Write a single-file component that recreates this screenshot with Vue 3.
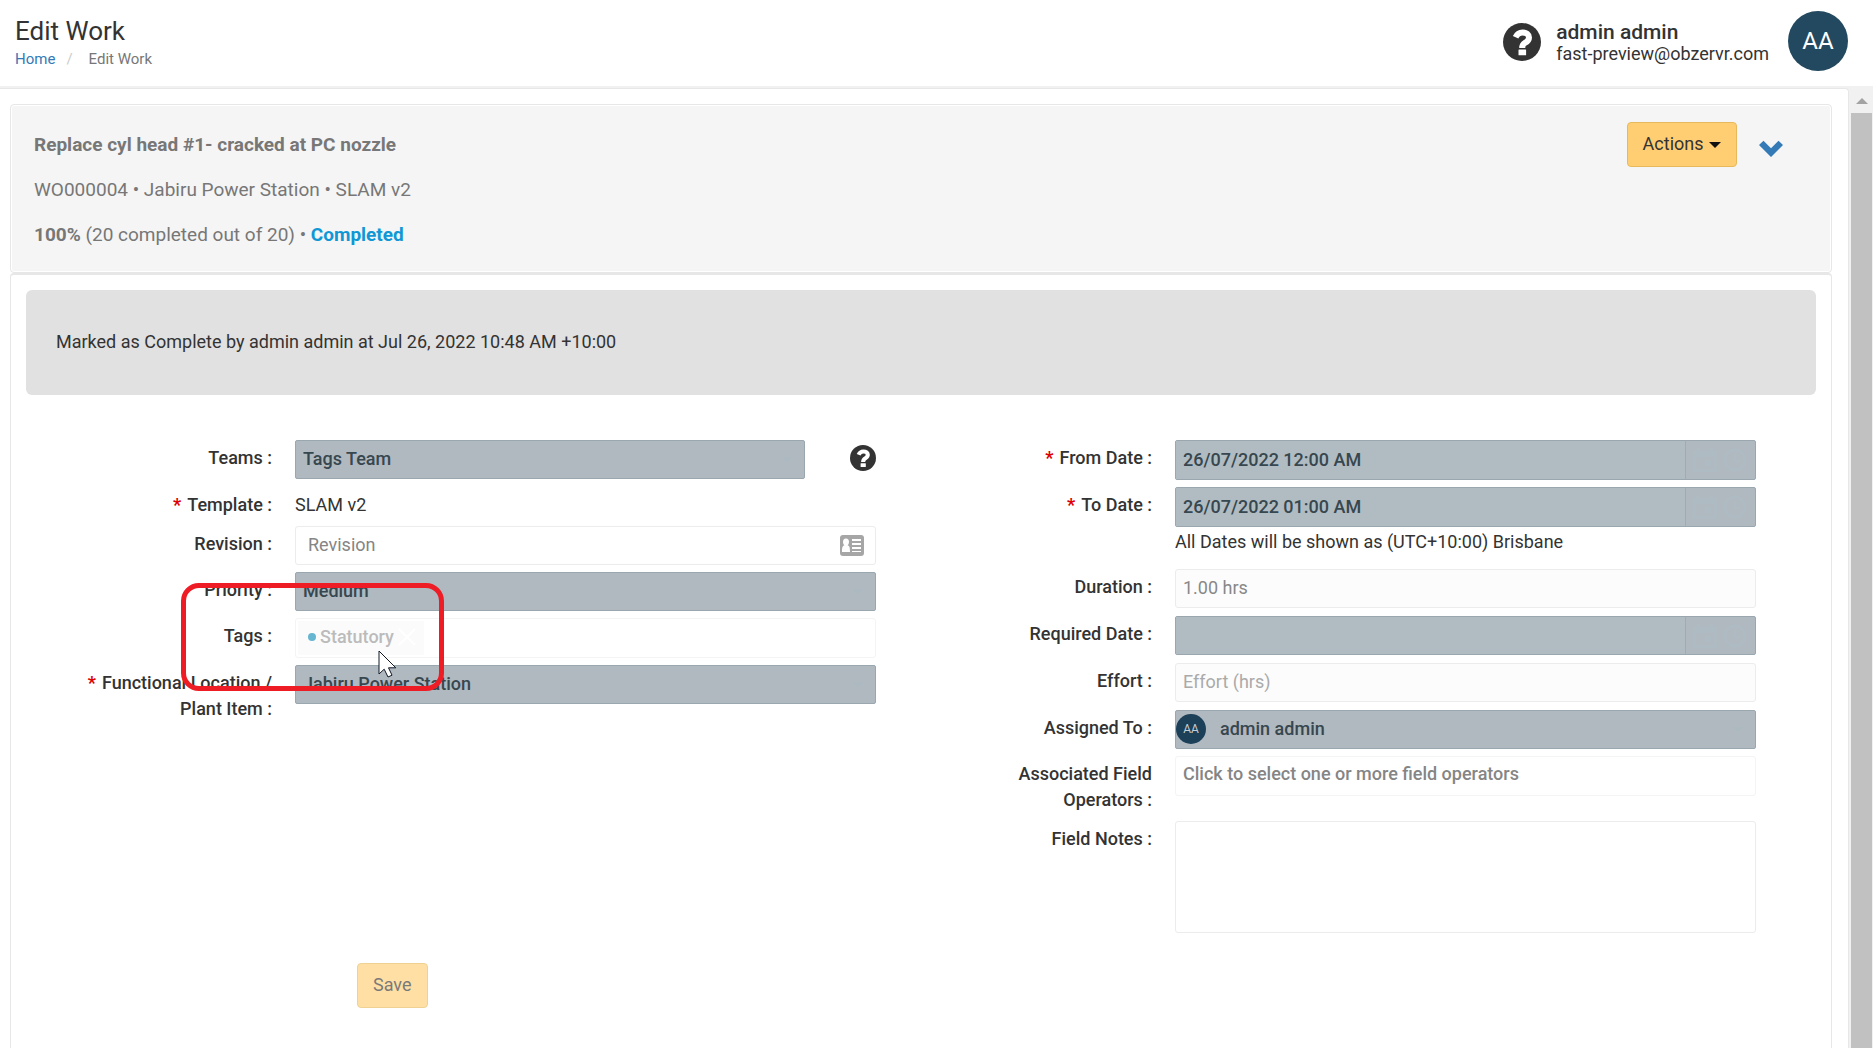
<script setup>
import { ref } from 'vue'

const revision = ref('')
const effort = ref('')
const notes = ref('')
</script>

<template>
  <div class="page">
    <header class="topbar">
      <div class="heading">
        <h1>Edit Work</h1>
        <nav class="crumbs" aria-label="Breadcrumb">
          <a href="#">Home</a>
          <span class="slash">/</span>
          <span>Edit Work</span>
        </nav>
      </div>
      <div class="account">
        <button class="icon-btn help" type="button" aria-label="Help">
          <svg width="38" height="38" viewBox="0 0 38 38" aria-hidden="true">
            <circle cx="19" cy="19" r="19" fill="#333" />
            <path d="M12.600 14.200 C14 11 16 9.400 19.500 9.400 C23.500 9.400 26 11.500 26 14.400 C26 17.400 24 18.700 22 19.800 C20 21 19.200 22 19.200 25" fill="none" stroke="#fff" stroke-width="6" />
            <rect x="15.500" y="26.600" width="7.600" height="5.600" rx="0.500" fill="#fff" />
          </svg>
        </button>
        <div class="who">
          <strong>admin admin</strong>
          <span>fast-preview@obzervr.com</span>
        </div>
        <div class="avatar">AA</div>
      </div>
    </header>

    <div class="viewport">
      <main class="content">
        <section class="card-head">
          <div class="summary">
            <p><b>Replace cyl head #1- cracked at PC nozzle</b></p>
            <p>WO000004 • Jabiru Power Station • SLAM v2</p>
            <p><b>100%</b> (20 completed out of 20) • <b class="done">Completed</b></p>
          </div>
          <div class="tools">
            <button class="btn" type="button">Actions <span class="caret"></span></button>
            <button class="icon-btn chevron" type="button" aria-label="Collapse">
              <svg width="26" height="18" viewBox="0 0 26 18" aria-hidden="true">
                <path d="M1 5 L5.500 0.800 L13 8.300 L20.500 0.800 L25 5 L13 17 Z" fill="#337ab7" />
              </svg>
            </button>
          </div>
        </section>

        <section class="card-body">
          <div class="notice">Marked as Complete by admin admin at Jul 26, 2022 10:48 AM +10:00</div>

          <form @submit.prevent>
            <div class="columns">
              <div class="column">
                <div class="row">
                  <label for="teams">Teams&nbsp;:</label>
                  <div class="control with-help">
                    <div class="overlaid">
                      <select id="teams" class="box grey" disabled><option>Tags Team</option></select>
                      <span class="drop"></span>
                    </div>
                    <button class="icon-btn" type="button" aria-label="About teams">
                      <svg width="26" height="26" viewBox="0 0 38 38" aria-hidden="true">
                        <circle cx="19" cy="19" r="19" fill="#333" />
                        <path d="M12.600 14.200 C14 11 16 9.400 19.500 9.400 C23.500 9.400 26 11.500 26 14.400 C26 17.400 24 18.700 22 19.800 C20 21 19.200 22 19.200 25" fill="none" stroke="#fff" stroke-width="6" />
                        <rect x="15.500" y="26.600" width="7.600" height="5.600" rx="0.500" fill="#fff" />
                      </svg>
                    </button>
                  </div>
                </div>
                <div class="row">
                  <span class="label required">Template&nbsp;:</span>
                  <div class="control plain">SLAM v2</div>
                </div>
                <div class="row">
                  <label for="revision">Revision&nbsp;:</label>
                  <div class="control overlaid">
                    <input id="revision" v-model="revision" class="box wide-pad" type="text" placeholder="Revision">
                    <svg class="card-icon" width="24" height="21" viewBox="0 0 24 21" aria-hidden="true">
                      <rect width="24" height="21" rx="3" fill="#a6a6a6" />
                      <path d="M6 3.500 C8 3.500 9 5 9 7 C9 8.500 8.300 9.600 7.600 10.300 C9.500 10.800 10 12.500 10 17 H2 C2 12.500 2.500 10.800 4.400 10.300 C3.700 9.600 3 8.500 3 7 C3 5 4 3.500 6 3.500 Z M12 4 H21 V6 H12 Z M12 8 H21 V10 H12 Z M12 12 H21 V14 H12 Z M12 16 H21 V17 H12 Z" fill="#fff" />
                    </svg>
                  </div>
                </div>
                <div class="row">
                  <label for="priority">Priority&nbsp;:</label>
                  <div class="control overlaid">
                    <select id="priority" class="box grey" disabled><option>Medium</option></select>
                    <span class="drop"></span>
                  </div>
                </div>
                <div class="row tags-row">
                  <span class="label">Tags&nbsp;:</span>
                  <div class="control tag-box">
                    <span class="tag">
                      <span class="dot"></span>Statutory
                      <button class="icon-btn" type="button" disabled aria-label="Remove Statutory">
                        <svg width="18" height="18" viewBox="0 0 18 18" aria-hidden="true">
                          <path d="M1 1 L17 17 M17 1 L1 17" stroke="#fff" stroke-width="2" />
                        </svg>
                      </button>
                    </span>
                  </div>
                  <div class="marker"></div>
                  <svg class="pointer" width="20" height="28" viewBox="0 0 20 28" aria-hidden="true">
                    <path d="M1 1 V24 L6.200 19.200 L10 27 L14 25.200 L10.500 17.800 H17.800 Z" fill="#fff" stroke="#111827" stroke-width="1" />
                  </svg>
                </div>
                <div class="row">
                  <label class="required" for="location">Functional Location / Plant Item&nbsp;:</label>
                  <div class="control overlaid">
                    <select id="location" class="box grey" disabled><option>Jabiru Power Station</option></select>
                    <span class="drop"></span>
                  </div>
                </div>
              </div>

              <div class="column">
                <div class="row">
                  <label class="required" for="from">From Date&nbsp;:</label>
                  <div class="control date">
                    <input id="from" type="text" value="26/07/2022 12:00 AM" disabled>
                    <span class="addon">
                      <svg width="56" height="26" viewBox="0 0 56 26" aria-hidden="true">
                        <path d="M1 4 H25 V25 H1 Z M4 10 V22 H22 V10 Z M5 1 H8 V4 H5 Z M18 1 H21 V4 H18 Z M13 13 H19 V19 H13 Z" fill-rule="evenodd" fill="#afbbc2" />
                        <circle cx="43" cy="13" r="10" fill="none" stroke="#afbbc2" stroke-width="3" />
                        <path d="M43 7 V14 H48" fill="none" stroke="#afbbc2" stroke-width="2" />
                      </svg>
                    </span>
                  </div>
                </div>
                <div class="row">
                  <label class="required" for="to">To Date&nbsp;:</label>
                  <div class="control">
                    <div class="date">
                      <input id="to" type="text" value="26/07/2022 01:00 AM" disabled>
                      <span class="addon">
                        <svg width="56" height="26" viewBox="0 0 56 26" aria-hidden="true">
                          <path d="M1 4 H25 V25 H1 Z M4 10 V22 H22 V10 Z M5 1 H8 V4 H5 Z M18 1 H21 V4 H18 Z M13 13 H19 V19 H13 Z" fill-rule="evenodd" fill="#afbbc2" />
                          <circle cx="43" cy="13" r="10" fill="none" stroke="#afbbc2" stroke-width="3" />
                          <path d="M43 7 V14 H48" fill="none" stroke="#afbbc2" stroke-width="2" />
                        </svg>
                      </span>
                    </div>
                    <p class="hint">All Dates will be shown as (UTC+10:00) Brisbane</p>
                  </div>
                </div>
                <div class="row tall">
                  <label for="duration">Duration&nbsp;:</label>
                  <div class="control">
                    <input id="duration" class="box off" type="text" value="1.00 hrs" disabled>
                  </div>
                </div>
                <div class="row tall">
                  <label for="required-date">Required Date&nbsp;:</label>
                  <div class="control date short">
                    <input id="required-date" type="text" disabled>
                    <span class="addon">
                      <svg width="56" height="26" viewBox="0 0 56 26" aria-hidden="true">
                        <path d="M1 4 H25 V25 H1 Z M4 10 V22 H22 V10 Z M5 1 H8 V4 H5 Z M18 1 H21 V4 H18 Z M13 13 H19 V19 H13 Z" fill-rule="evenodd" fill="#afbbc2" />
                        <circle cx="43" cy="13" r="10" fill="none" stroke="#afbbc2" stroke-width="3" />
                        <path d="M43 7 V14 H48" fill="none" stroke="#afbbc2" stroke-width="2" />
                      </svg>
                    </span>
                  </div>
                </div>
                <div class="row tall">
                  <label for="effort">Effort&nbsp;:</label>
                  <div class="control">
                    <input id="effort" v-model="effort" class="box off" type="text" placeholder="Effort (hrs)" disabled>
                  </div>
                </div>
                <div class="row">
                  <label for="assigned">Assigned To&nbsp;:</label>
                  <div class="control overlaid">
                    <select id="assigned" class="box grey person" disabled><option>admin admin</option></select>
                    <span class="avatar mini">AA</span>
                    <span class="drop"></span>
                  </div>
                </div>
                <div class="row">
                  <label for="operators">Associated Field Operators&nbsp;:</label>
                  <div class="control">
                    <input id="operators" class="box faint" type="text" placeholder="Click to select one or more field operators">
                  </div>
                </div>
                <div class="row">
                  <label for="notes">Field Notes&nbsp;:</label>
                  <div class="control">
                    <textarea id="notes" v-model="notes" class="box area"></textarea>
                  </div>
                </div>
              </div>
            </div>
            <div class="actions">
              <button class="btn" type="submit" disabled>Save</button>
            </div>
          </form>
        </section>
      </main>
      <div class="scrollbar" aria-hidden="true">
        <svg width="12" height="6" viewBox="0 0 12 6"><path d="M0 6 L6 0 L12 6 Z" fill="#a3a3a3" /></svg>
        <div class="thumb"></div>
      </div>
    </div>
  </div>
</template>

<style>
body {
  overflow: hidden;
}
</style>

<style scoped>
.page,
.page * {
  box-sizing: border-box;
}
.page {
  display: flex;
  flex-direction: column;
  height: 100vh;
  overflow: hidden;
  font: 400 18px/26px Roboto, "Liberation Sans", sans-serif;
  color: #333;
  background: #fff;
}
button,
input,
select,
textarea {
  font: inherit;
  color: inherit;
  margin: 0;
}
.icon-btn {
  display: flex;
  padding: 0;
  border: 0;
  background: none;
}
.topbar {
  display: flex;
  flex: none;
  justify-content: space-between;
  height: 86px;
  padding: 11px 25px 0 15px;
}
h1 {
  margin: 5px 0 0;
  font-size: 26px;
  line-height: 30px;
  font-weight: 400;
}
.crumbs {
  display: flex;
  font-size: 15px;
  line-height: 26px;
  color: #777;
}
.crumbs a {
  color: #337ab7;
  text-decoration: none;
}
.slash {
  padding: 0 16px 0 11px;
  color: #ccc;
}
.account {
  display: flex;
  align-items: center;
  height: 60px;
}
.help {
  margin-top: 2px;
}
.who {
  display: flex;
  flex-direction: column;
  margin: 0 19px 0 15px;
  padding-top: 4px;
  line-height: 22px;
}
.who strong {
  font-size: 21px;
  font-weight: 500;
}
.avatar {
  width: 60px;
  height: 60px;
  border-radius: 50%;
  background: #22495f;
  color: #fff;
  font-size: 24px;
  line-height: 60px;
  text-align: center;
}
.viewport {
  display: flex;
  flex: 1;
  min-height: 0;
  padding-top: 2px;
  background: #f1f1f1;
}
.content {
  display: flex;
  flex: 1;
  flex-direction: column;
  padding: 15px 16px 0 10px;
  border: solid #e7e7e7;
  border-width: 1px 1px 0 0;
  border-radius: 0 4px 0 0;
  background: #fff;
}
.scrollbar {
  display: flex;
  flex-direction: column;
  align-items: center;
  width: 24px;
  padding: 10px 1px 0 2px;
}
.thumb {
  flex: 1;
  width: 21px;
  margin-top: 9px;
  background: #c1c1c1;
}
.card-head {
  display: flex;
  justify-content: space-between;
  padding: 17px 47px 15px 23px;
  border: 1px solid #e7e7e7;
  border-radius: 4px;
  background: #f5f5f5;
  box-shadow: inset 0 0 0 1px #fff;
}
.summary p {
  margin: 0;
  font-size: 19px;
  line-height: 45px;
  color: #777;
}
.summary b {
  font-weight: 700;
}
.summary .done {
  color: #1097d5;
}
.tools {
  display: flex;
  align-items: flex-start;
  gap: 21px;
}
.chevron {
  margin-top: 18px;
}
.btn {
  height: 45px;
  padding: 0 15px 1px;
  border: 1px solid #e8b95c;
  border-radius: 4px;
  background: #ffce73;
}
.btn:disabled {
  opacity: 0.65;
}
.caret {
  display: inline-block;
  margin-left: 1px;
  border: 6px solid transparent;
  border-top-color: #111;
  border-bottom: 0;
  vertical-align: middle;
}
.card-body {
  flex: 1;
  padding: 15px;
  border: solid #e7e7e7;
  border-width: 2px 1px 0;
  border-radius: 4px 4px 0 0;
}
.notice {
  padding: 39px 30px 40px;
  border-radius: 6px;
  background: #e1e1e1;
}
.columns {
  display: grid;
  grid-template-columns: 1fr 1fr;
  padding: 45px 30px 0 0;
}
.column {
  display: flex;
  flex-direction: column;
  gap: 7px;
  padding: 0 30px 0 46px;
}
.row {
  display: flex;
  gap: 23px;
}
.row.tall {
  height: 40px;
}
label,
.label {
  flex: none;
  width: 200px;
  padding: 5px 0 1px;
  font-weight: 500;
  text-align: right;
}
.required::before {
  content: "*";
  margin-right: 6px;
  color: #d00;
  font-weight: 700;
}
.control {
  flex: 1;
  min-width: 0;
}
.overlaid {
  position: relative;
}
.with-help {
  display: flex;
  align-items: flex-start;
  gap: 45px;
  height: 40px;
}
.with-help .overlaid {
  flex: 1;
}
.with-help .icon-btn {
  margin-top: 5px;
}
.plain {
  padding-top: 5px;
}
.box {
  display: block;
  width: 100%;
  height: 39px;
  padding: 0 7px 2px;
  border: 1px solid #ececec;
  border-radius: 3px;
  outline: 0;
  background: #fff;
  appearance: none;
}
.box::placeholder {
  color: #858585;
  opacity: 1;
}
.wide-pad {
  padding-left: 12px;
}
.grey {
  border-color: #9aa7af;
  border-radius: 2px;
  background: #b0b8c0;
  color: #37474f;
  font-weight: 500;
  opacity: 1;
}
.person {
  padding-left: 44px;
}
.drop {
  position: absolute;
  top: 17px;
  right: 12px;
  border: 6px solid transparent;
  border-top-color: #adb9c0;
  border-bottom: 0;
}
.card-icon {
  position: absolute;
  top: 9px;
  right: 12px;
}
.off {
  background: #fcfcfc;
  color: #888;
}
.off::placeholder {
  color: #aaa;
}
.faint {
  height: 40px;
  padding-bottom: 6px;
  border-color: #f4f4f4;
  font-weight: 500;
}
.area {
  height: 112px;
  resize: none;
}
.date {
  display: flex;
  height: 40px;
  border: 1px solid #9aa7af;
  border-radius: 2px;
  background: #b0b8c0;
}
.date.short {
  height: 39px;
}
.date input {
  flex: 1;
  min-width: 0;
  padding: 0 7px;
  border: 0;
  border-right: 1px solid #a1abb3;
  background: #b1bcc2;
  color: #37474f;
  font-weight: 500;
}
.addon {
  display: flex;
  align-items: center;
  width: 69px;
  padding-left: 6px;
}
.hint {
  margin: 0;
  padding: 2px 0 7px;
}
.tags-row {
  position: relative;
}
.tag-box {
  display: flex;
  height: 40px;
  padding: 2px;
  border: 1px solid #f4f4f4;
  border-radius: 3px;
}
.tag {
  display: flex;
  align-items: center;
  gap: 4px;
  padding: 0 8px 2px 10px;
  background: #fbfbfb;
  color: #bbb;
  font-weight: 500;
}
.dot {
  width: 8px;
  height: 8px;
  border-radius: 50%;
  background: #66b5d1;
}
.marker {
  position: absolute;
  z-index: 1;
  top: -35px;
  left: 109px;
  width: 263px;
  height: 108px;
  border: 5px solid #ee1c25;
  border-radius: 18px;
}
.pointer {
  position: absolute;
  z-index: 2;
  top: 32px;
  left: 306px;
}
.avatar.mini {
  position: absolute;
  top: 4px;
  left: 1px;
  width: 30px;
  height: 30px;
  font-size: 12px;
  line-height: 30px;
  color: #c5ccd2;
  background: #1b4058;
}
.actions {
  display: flex;
  padding: 30px 0 0 331px;
}
</style>
